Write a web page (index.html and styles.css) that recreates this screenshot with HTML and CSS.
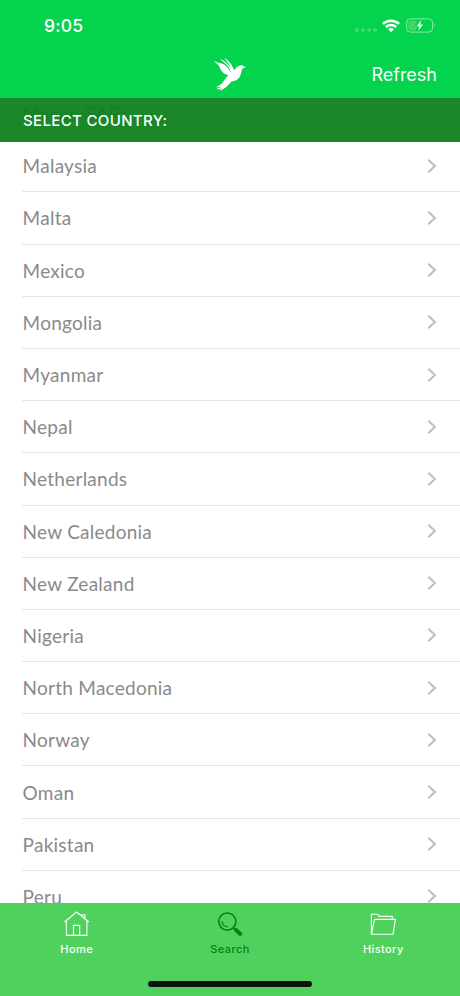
FILE: index.html
```html
<!DOCTYPE html>
<html lang="en">
<head>
    <meta charset="UTF-8">
    <meta name="viewport" content="width=device-width, initial-scale=1.0">
    <title>Select Country</title>
    <link rel="stylesheet" href="styles.css">
</head>
<body>
    <svg class="sprite">
        <symbol id="chevron" viewBox="0 0 10 16">
            <path d="M1.3 1.7L7.9 8L1.3 14.3" fill="none" stroke="#bfbfc1" stroke-width="2.1"/>
        </symbol>
    </svg>
    <div class="screen">
        <header class="top">
            <div class="status-bar">
                <span class="time">9:05</span>
                <div class="indicators">
                    <div class="signal"><i></i><i></i><i></i><i></i></div>
                    <svg class="wifi" width="18" height="14" viewBox="0 0 18 14">
                        <path d="M.9 4.9C5.4 .6 12.6 .6 17.1 4.9" fill="none" stroke="#fff" stroke-width="2.6"/>
                        <path d="M3.9 8C6.8 5.3 11.2 5.3 14.1 8" fill="none" stroke="#fff" stroke-width="2.4"/>
                        <path d="M6.2 10.2Q9 8 11.8 10.2L9 13.2Z" fill="#fff"/>
                    </svg>
                    <svg class="battery" width="30" height="15" viewBox="0 0 30 15">
                        <rect x=".6" y=".9" width="26" height="13.2" rx="3.8" fill="none" stroke="#8ceba9"/>
                        <path d="M4.5 2.7H11L8.7 8.2H11.2L10 12.4H4.5Q2.4 12.4 2.4 10.3V4.8Q2.4 2.7 4.5 2.7Z" fill="#45d568"/>
                        <path d="M15.3 2L10.6 8.3H13.4L12.2 13L17 6.6H14.1Z" fill="#fff"/>
                        <path d="M28.2 5.2Q29.7 7.5 28.2 9.8Z" fill="#8ceba9"/>
                    </svg>
                </div>
            </div>
            <nav class="nav-bar">
                <svg class="logo" width="34" height="36" viewBox="0 0 34 36">
                    <path d="M.8 5C5 7.2 9.5 6.6 13 10C15.5 12.4 16.7 14.5 17.6 16.2C17.2 12.8 15.3 10.3 12.8 8C10.6 6 8.7 4.6 7.4 3C11 4.1 14.6 7.6 17.4 11.5C16 7.4 13.4 4.4 11 1.4C15.7 4.3 20.2 9.3 21 14.8C22.1 12.2 24 10.6 26.3 9.7C28.5 8.8 30 9.4 30.7 10.6L33.3 11.1L30.5 12.1C28.5 13.2 28.4 15.3 27.9 17.5C26.8 22.8 23.3 25 18.4 25.6C15.4 29.4 11.2 34 6.3 34.4L9.5 32C7.2 33.2 5.3 33.5 3.4 33.1L8.2 31L2.4 31.3C7.8 29.6 10.1 26.3 12.3 22.8C13.3 21.2 14.4 20 15.8 19.3C10 18.3 7.8 14.5 6.3 10.6C5.2 7.9 2.5 7.2 .8 5Z" fill="#fff"/>
                </svg>
                <a href="#" class="refresh">Refresh</a>
            </nav>
        </header>

        <main class="content">
            <h1 class="section-title">SELECT COUNTRY:</h1>
            <ul class="countries">
                <li><span>Macao SAR</span></li>
                <li><span>Malaysia</span><svg><use href="#chevron"/></svg></li>
                <li><span>Malta</span><svg><use href="#chevron"/></svg></li>
                <li><span>Mexico</span><svg><use href="#chevron"/></svg></li>
                <li><span>Mongolia</span><svg><use href="#chevron"/></svg></li>
                <li><span>Myanmar</span><svg><use href="#chevron"/></svg></li>
                <li><span>Nepal</span><svg><use href="#chevron"/></svg></li>
                <li><span>Netherlands</span><svg><use href="#chevron"/></svg></li>
                <li><span>New Caledonia</span><svg><use href="#chevron"/></svg></li>
                <li><span>New Zealand</span><svg><use href="#chevron"/></svg></li>
                <li><span>Nigeria</span><svg><use href="#chevron"/></svg></li>
                <li><span>North Macedonia</span><svg><use href="#chevron"/></svg></li>
                <li><span>Norway</span><svg><use href="#chevron"/></svg></li>
                <li><span>Oman</span><svg><use href="#chevron"/></svg></li>
                <li><span>Pakistan</span><svg><use href="#chevron"/></svg></li>
                <li><span>Peru</span><svg><use href="#chevron"/></svg></li>
            </ul>
        </main>

        <footer class="tab-bar">
            <div class="tabs">
                <a href="#" class="tab">
                    <svg width="28" height="28" viewBox="0 0 28 28" fill="none" stroke="#fff" stroke-width="1.1">
                        <path d="M3.4 11.3V25.4H23.9V11.3M1.5 12L13.6 2L25.8 12M18.7 6V4.8H21.9V8.8M10.5 25.4V15.4H16.7V25.4"/>
                    </svg>
                    <span>Home</span>
                </a>
                <a href="#" class="tab active">
                    <svg width="28" height="28" viewBox="0 0 28 28" fill="none" stroke="#067f16">
                        <circle cx="11.3" cy="11.6" r="8.6" stroke-width="1.6"/>
                        <path d="M6 11.3C6.2 14.8 8.5 16.9 11.8 16.7" stroke-width="1.2"/>
                        <path d="M17.6 17.9L20 20.2" stroke-width="2"/>
                        <path d="M20.2 20.1L24.2 23.9" stroke-width="4" stroke-linecap="round"/>
                    </svg>
                    <span>Search</span>
                </a>
                <a href="#" class="tab">
                    <svg width="28" height="28" viewBox="0 0 28 28" fill="none" stroke="#fff" stroke-width="1.1" stroke-linejoin="round">
                        <path d="M2.4 24V4.2H8.5L10.1 6.4H23.2V9.2M2.4 24.3L5.5 9.4H26.4L24 24.3Z"/>
                    </svg>
                    <span>History</span>
                </a>
            </div>
            <div class="home-indicator"></div>
        </footer>
    </div>
</body>
</html>
```
FILE: styles.css
```css
* {
    box-sizing: border-box;
}
body {
    margin: 0;
    background-color: #fff;
    font-family: Inter, "Liberation Sans", sans-serif;
}
a {
    text-decoration: none;
}
.sprite {
    display: none;
}
.screen {
    display: flex;
    flex-direction: column;
    width: 460px;
    height: 996px;
    overflow: hidden;
}

/* status and navigation bars */
.top {
    height: 98px;
    flex-shrink: 0;
    background-color: #04d34e;
    color: #fff;
}
.status-bar {
    display: flex;
    justify-content: space-between;
    align-items: center;
    height: 50px;
    padding: 1px 24px 0 44px;
}
.time {
    font-size: 17.5px;
    font-weight: 500;
    letter-spacing: 0.2px;
}
.indicators {
    display: flex;
    align-items: center;
}
.signal {
    display: flex;
    gap: 2px;
    margin: 9px 5px 0 0;
}
.signal i {
    width: 4px;
    height: 4px;
    border-radius: 50%;
    background-color: #3bdd72;
}
.wifi {
    margin-right: 6px;
}
.nav-bar {
    display: grid;
    grid-template-columns: 1fr 34px 1fr;
    align-items: center;
    height: 48px;
    padding: 0 23px;
}
.logo {
    grid-column: 2;
}
.refresh {
    justify-self: end;
    color: #fff;
    font-size: 18px;
}

/* country list, scrolled under its title */
.content {
    position: relative;
    flex: 1;
    min-height: 0;
    overflow: hidden;
}
.section-title {
    position: absolute;
    top: 0;
    left: 0;
    right: 0;
    height: 44px;
    margin: 0;
    padding-left: 23px;
    background-color: rgba(12, 129, 28, 0.94);
    color: #fff;
    font-size: 15px;
    font-weight: 500;
    line-height: 46px;
    letter-spacing: 0.35px;
}
.countries {
    list-style: none;
    margin: -10px 0 0;
    padding: 0 0 0 22px;
}
.countries li {
    display: flex;
    justify-content: space-between;
    align-items: center;
    height: 52.2px;
    padding: 0 23.5px 0 0.6px;
    border-bottom: 1px solid #e6e6e6;
    color: #8a8a8a;
    font-family: Lato, sans-serif;
    font-size: 19px;
    letter-spacing: 0.25px;
}
.countries svg {
    width: 10px;
    height: 16px;
}

/* bottom tabs */
.tab-bar {
    display: flex;
    flex-direction: column;
    justify-content: space-between;
    align-items: center;
    height: 93px;
    flex-shrink: 0;
    padding: 7px 0 9px;
    background-color: #50d15e;
}
.tabs {
    display: flex;
    width: 100%;
}
.tab {
    flex: 1;
    display: flex;
    flex-direction: column;
    align-items: center;
    gap: 4px;
    color: #fff;
    font-size: 11px;
    font-weight: 500;
    line-height: 14px;
    letter-spacing: 0.4px;
}
.tab.active {
    color: #067f16;
}
.home-indicator {
    width: 164px;
    height: 6px;
    border-radius: 3px;
    background-color: #0b130c;
}
```
